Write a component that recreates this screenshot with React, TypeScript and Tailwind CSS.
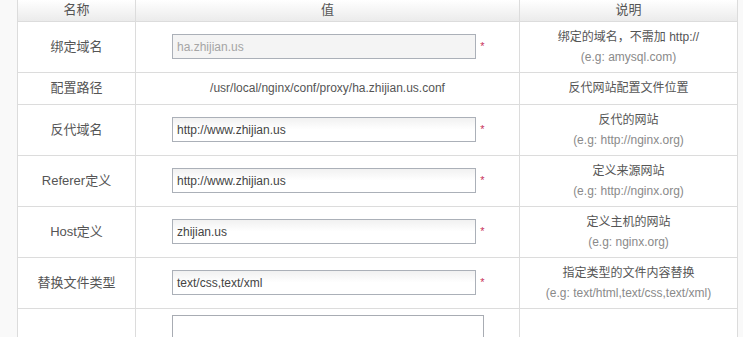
import React from "react";

const font = { fontFamily: '"Liberation Sans", Arial, "Noto Sans CJK SC", sans-serif' };

type Row = {
  label: string;
  kind: "input" | "disabled" | "text" | "textarea";
  value?: string;
  desc?: string;
  eg?: string;
  h: number;
};

const rows: Row[] = [
  { label: "绑定域名", kind: "disabled", value: "ha.zhijian.us", desc: "绑定的域名，不需加 http://", eg: "(e.g: amysql.com)", h: 51 },
  { label: "配置路径", kind: "text", value: "/usr/local/nginx/conf/proxy/ha.zhijian.us.conf", desc: "反代网站配置文件位置", h: 32 },
  { label: "反代域名", kind: "input", value: "http://www.zhijian.us", desc: "反代的网站", eg: "(e.g: http://nginx.org)", h: 51 },
  { label: "Referer定义", kind: "input", value: "http://www.zhijian.us", desc: "定义来源网站", eg: "(e.g: http://nginx.org)", h: 51 },
  { label: "Host定义", kind: "input", value: "zhijian.us", desc: "定义主机的网站", eg: "(e.g: nginx.org)", h: 51 },
  { label: "替换文件类型", kind: "input", value: "text/css,text/xml", desc: "指定类型的文件内容替换", eg: "(e.g: text/html,text/css,text/xml)", h: 51 },
  { label: "", kind: "textarea", h: 60 },
];

function Field({ row }: { row: Row }) {
  if (row.kind === "text") {
    return <span className="text-[12px] text-[#555]">{row.value}</span>;
  }
  if (row.kind === "textarea") {
    return (
      <div className="flex justify-center pt-[6px] self-start">
        <div className="w-[312px] h-[60px] border border-[#a8acb3] bg-white" />
      </div>
    );
  }
  const disabled = row.kind === "disabled";
  return (
    <div className="flex items-center justify-center pl-[3px]">
      <div
        className={
          "w-[304px] h-[25px] border border-[#abb0b8] flex items-center px-[4px] text-[12px] " +
          (disabled
            ? "bg-[#f4f4f4] text-[#a5a5a5]"
            : "bg-gradient-to-b from-[#f1f1f1] via-white to-white text-[#444]")
        }
      >
        {row.value}
      </div>
      <span className="ml-[3px] w-[7px] text-[11px] text-[#c8325a] leading-none">*</span>
    </div>
  );
}

export default function App() {
  return (
    <div className="w-[743px] h-[337px] overflow-hidden bg-[#f9f9f9]" style={font}>
      <div className="pl-[17px]">
        <table className="border-collapse bg-white w-[720px] table-fixed">
          <colgroup>
            <col className="w-[118px]" />
            <col className="w-[384px]" />
            <col className="w-[218px]" />
          </colgroup>
          <thead>
            <tr className="h-[21px] bg-gradient-to-b from-white to-[#ebebeb]">
              <th className="border border-t-0 border-[#dcdcdc] font-normal text-[13px] text-[#555] p-0 leading-[20px]">名称</th>
              <th className="border border-t-0 border-[#dcdcdc] font-normal text-[13px] text-[#555] p-0 leading-[20px]">值</th>
              <th className="border border-t-0 border-[#dcdcdc] font-normal text-[13px] text-[#555] p-0 leading-[20px]">说明</th>
            </tr>
          </thead>
          <tbody>
            {rows.map((r, i) => (
              <tr key={i} style={{ height: r.h }}>
                <td className="border border-[#dcdcdc] text-center text-[13px] text-[#555] p-0">{r.label}</td>
                <td className="border border-[#dcdcdc] text-center p-0 align-middle">
                  <div className="flex justify-center">
                    <Field row={r} />
                  </div>
                </td>
                <td className="border border-[#dcdcdc] text-center p-0">
                  {r.desc && <div className="text-[12px] text-[#555] leading-[20px]">{r.desc}</div>}
                  {r.eg && <div className="text-[12px] text-[#8a8a8a] leading-[20px]">{r.eg}</div>}
                </td>
              </tr>
            ))}
          </tbody>
        </table>
      </div>
    </div>
  );
}
